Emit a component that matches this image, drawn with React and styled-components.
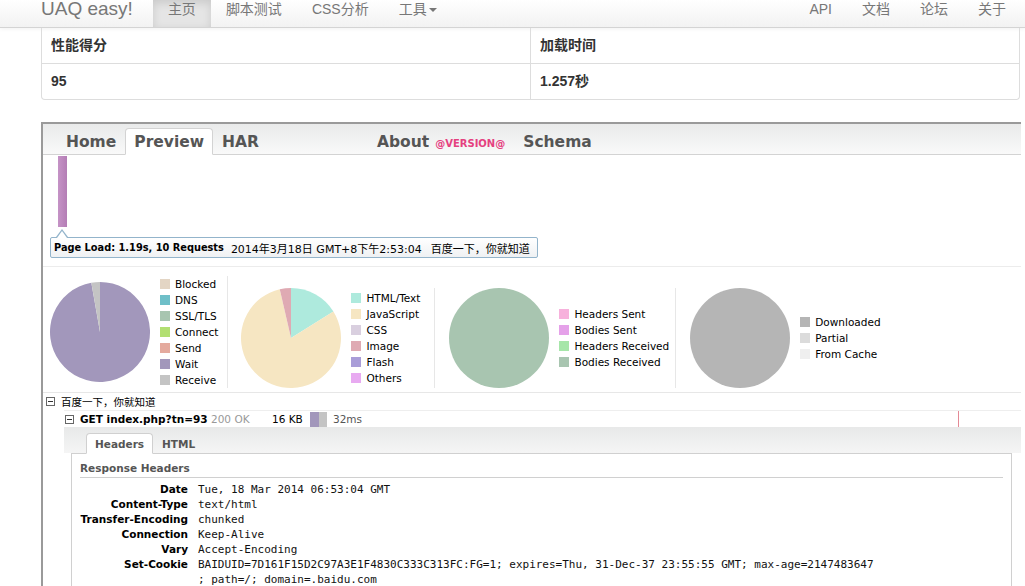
import React from "react";
import styled, { createGlobalStyle } from "styled-components";

const HAR_FONT = `"DejaVu Sans", "Noto Sans CJK SC", sans-serif`;
const NAV_FONT = `"Liberation Sans", "Noto Sans CJK SC", sans-serif`;

const GlobalStyle = createGlobalStyle`
  html, body {
    margin: 0;
    padding: 0;
    background: #fff;
    overflow: hidden;
  }
  body {
    font-family: ${NAV_FONT};
    color: #333;
  }
`;

const Navbar = styled.div`
  height: 28px;
  box-sizing: border-box;
  display: flex;
  align-items: stretch;
  padding: 0 4px 0 41px;
  background: linear-gradient(#ffffff, #f2f2f2);
  border-bottom: 1px solid #d4d4d4;
  box-shadow: 0 1px 4px rgba(0, 0, 0, 0.06);
  font-family: ${NAV_FONT};
`;

const Brand = styled.div`
  font-size: 19px;
  line-height: 18px;
  color: #777;
  padding-right: 20px;
`;

const NavGroup = styled.div`
  display: flex;
  margin-left: ${(p) => (p.right ? "auto" : "0")};
`;

const NavItem = styled.div`
  padding: 0 15px;
  font-size: 14px;
  line-height: 18px;
  color: #777;
  background: ${(p) => (p.active ? "#e5e5e5" : "transparent")};
  box-shadow: ${(p) => (p.active ? "inset 0 3px 8px rgba(0,0,0,0.12)" : "none")};
`;

const Caret = styled.span`
  display: inline-block;
  width: 0;
  height: 0;
  margin-left: 2px;
  vertical-align: middle;
  border-top: 4px solid #777;
  border-left: 4px solid transparent;
  border-right: 4px solid transparent;
`;

const ScoreTable = styled.div`
  margin: 0 5px 0 41px;
  display: grid;
  grid-template-columns: 488px 1fr;
  border: 1px solid #ddd;
  border-top: none;
  border-radius: 0 0 4px 4px;
  font-family: ${NAV_FONT};
  font-size: 14px;
  font-weight: bold;
  color: #333;
`;

const ScoreCell = styled.div`
  padding: 8px 9px;
  line-height: 19px;
  border-left: ${(p) => (p.second ? "1px solid #ddd" : "none")};
  border-top: ${(p) => (p.body ? "1px solid #ddd" : "none")};
`;

const Viewer = styled.div`
  margin: 22px 0 0 41px;
  width: 980px;
  box-sizing: border-box;
  border-top: 2px solid #9a9a9a;
  border-left: 2px solid #9a9a9a;
  font-family: ${HAR_FONT};
`;

const TabBar = styled.div`
  height: 31px;
  box-sizing: border-box;
  display: flex;
  align-items: flex-end;
  padding-left: 14px;
  background: linear-gradient(#e9eaea, #f9f9f9);
  border-bottom: 1px solid #d3d3d3;
`;

const Tab = styled.div`
  height: 27px;
  box-sizing: border-box;
  margin-bottom: -1px;
  padding: 0 8px;
  display: flex;
  align-items: center;
  font-size: 15.5px;
  font-weight: bold;
  color: #555;
  margin-left: ${(p) => p.offset || 0}px;
  background: ${(p) => (p.active ? "#fff" : "transparent")};
  border: 1px solid ${(p) => (p.active ? "#d3d3d3" : "transparent")};
  border-bottom-color: ${(p) => (p.active ? "#fff" : "transparent")};
  border-radius: 4px 4px 0 0;
`;

const Version = styled.span`
  margin-left: 6px;
  margin-top: 3px;
  font-size: 10px;
  font-weight: bold;
  color: #e5407f;
`;

const PreviewArea = styled.div`
  padding: 1px 0 8px 0;
  border-bottom: 1px solid #ececec;
`;

const PageBar = styled.div`
  margin-left: 15px;
  width: 9px;
  height: 71px;
  background: linear-gradient(to right, #c593c6, #b47db5);
`;

const Tooltip = styled.div`
  position: relative;
  margin: 10px 0 0 7px;
  width: 488px;
  height: 21px;
  box-sizing: border-box;
  padding: 0 0 0 3px;
  display: flex;
  align-items: center;
  gap: 7px;
  border: 1px solid #93b4cb;
  border-radius: 2px;
  background: linear-gradient(#ffffff, #eff1f3);
  font-size: 11px;
  color: #000;
  white-space: nowrap;

  &::before,
  &::after {
    content: "";
    position: absolute;
    left: 5px;
    width: 0;
    height: 0;
    border-left: 6px solid transparent;
    border-right: 6px solid transparent;
  }
  &::before {
    top: -9px;
    border-bottom: 8px solid #93b4cb;
  }
  &::after {
    top: -7px;
    left: 6px;
    border-left-width: 5px;
    border-right-width: 5px;
    border-bottom: 7px solid #fff;
  }
`;

const Strong = styled.span`
  font-weight: bold;
  font-size: 9.8px;
`;

const TipTitle = styled.span`
  margin-left: 2px;
`;

const ChartRow = styled.div`
  display: flex;
  align-items: flex-end;
  padding: 9px 0 4px 0;
  border-bottom: 1px solid #e7e7e7;
`;

const ChartBlock = styled.div`
  display: flex;
  align-items: center;
  gap: 10px;
  padding: 0 ${(p) => (p.last ? 0 : p.padRight)}px 0 ${(p) => p.padLeft}px;
  border-right: ${(p) => (p.last ? "none" : "1px solid #e7e7e7")};
`;

const Legend = styled.div`
  display: flex;
  flex-direction: column;
`;

const LegendItem = styled.div`
  display: flex;
  align-items: center;
  gap: 5px;
  height: 16px;
  font-size: 10.5px;
  color: #000;
  white-space: nowrap;
`;

const Swatch = styled.span`
  width: 10px;
  height: 10px;
  background: ${(p) => p.color};
`;

const TreeRow = styled.div`
  position: relative;
  display: flex;
  align-items: center;
  height: 17px;
  box-sizing: border-box;
  margin-left: ${(p) => p.indent}px;
  padding-left: ${(p) => p.pad}px;
  border-top: ${(p) => (p.line ? "1px solid #eee" : "none")};
  font-size: 10.5px;
  color: #000;
  white-space: nowrap;
`;

const Toggle = styled.span`
  position: relative;
  width: 9px;
  height: 9px;
  box-sizing: border-box;
  border: 1px solid #666;
  margin-right: 6px;
  flex: none;
  &::after {
    content: "";
    position: absolute;
    left: 1px;
    right: 1px;
    top: 3px;
    height: 1px;
    background: #333;
  }
`;

const UrlCell = styled.span`
  width: 128px;
  overflow: hidden;
  font-weight: bold;
`;

const Cell = styled.span`
  width: ${(p) => p.w}px;
  padding-left: ${(p) => p.pl || 0}px;
  color: ${(p) => p.color || "#000"};
`;

const TimeBar = styled.span`
  display: flex;
  height: 15px;
  margin-right: 6px;
`;

const TimeSeg = styled.span`
  width: ${(p) => p.w}px;
  background: ${(p) => p.color};
`;

const LoadMarker = styled.span`
  position: absolute;
  left: 894px;
  top: 0;
  bottom: 0;
  width: 1px;
  background: #e48a96;
`;

const Detail = styled.div`
  margin-left: 21px;
`;

const DetailTabs = styled.div`
  height: 26px;
  box-sizing: border-box;
  display: flex;
  align-items: flex-end;
  padding-left: 22px;
  background: linear-gradient(#e8e9e9, #f5f5f5);
`;

const DetailTab = styled.div`
  height: 21px;
  box-sizing: border-box;
  padding: 0 8px;
  margin-bottom: -1px;
  display: flex;
  align-items: center;
  font-size: 10.5px;
  font-weight: bold;
  color: #555;
  background: ${(p) => (p.active ? "#fff" : "transparent")};
  border: 1px solid ${(p) => (p.active ? "#d0d0d0" : "transparent")};
  border-bottom-color: ${(p) => (p.active ? "#fff" : "transparent")};
  border-radius: 4px 4px 0 0;
  position: relative;
  z-index: 1;
`;

const DetailBody = styled.div`
  margin: 0 9px 0 7px;
  padding: 8px 8px 0 8px;
  border: 1px solid #d0d0d0;
  border-bottom: none;
  min-height: 200px;
`;

const SectionTitle = styled.div`
  font-size: 10.5px;
  font-weight: bold;
  color: #555;
  line-height: 13px;
  padding-bottom: 2px;
  border-bottom: 1px solid #d0d0d0;
  margin-bottom: 4px;
`;

const HeaderGrid = styled.div`
  display: grid;
  grid-template-columns: 108px 1fr;
  column-gap: 10px;
`;

const HeaderName = styled.div`
  text-align: right;
  font-size: 10.5px;
  font-weight: bold;
  line-height: 15px;
  color: #000;
`;

const HeaderValue = styled.div`
  font-family: "DejaVu Sans Mono", monospace;
  font-size: 11px;
  line-height: 15px;
  color: #111;
  white-space: nowrap;
`;

const slicePath = (a0, a1) => {
  const p = (a) => {
    const r = (a * Math.PI) / 180;
    return `${(50 + 50 * Math.sin(r)).toFixed(2)},${(50 - 50 * Math.cos(r)).toFixed(2)}`;
  };
  const large = a1 - a0 > 180 ? 1 : 0;
  return `M50,50 L${p(a0)} A50,50 0 ${large} 1 ${p(a1)} Z`;
};

const Pie = ({ slices }) => (
  <svg width="100" height="100" viewBox="0 0 100 100">
    {slices.length === 1 ? (
      <circle cx="50" cy="50" r="50" fill={slices[0].color} />
    ) : (
      slices.map((s, i) => <path key={i} d={slicePath(s.from, s.to)} fill={s.color} />)
    )}
  </svg>
);

const charts = [
  {
    padLeft: 7,
    padRight: 9,
    slices: [
      { from: 0, to: 350, color: "#a297bb" },
      { from: 350, to: 360, color: "#c4c4c4" },
    ],
    legend: [
      ["Blocked", "#e3d5c4"],
      ["DNS", "#6fbfc8"],
      ["SSL/TLS", "#a8c5b0"],
      ["Connect", "#b2df72"],
      ["Send", "#e4aa9e"],
      ["Wait", "#a297bb"],
      ["Receive", "#c4c4c4"],
    ],
  },
  {
    padLeft: 13,
    padRight: 14,
    slices: [
      { from: 0, to: 58, color: "#aeeadd" },
      { from: 58, to: 347, color: "#f6e6c2" },
      { from: 347, to: 360, color: "#dfaab3" },
    ],
    legend: [
      ["HTML/Text", "#aeeadd"],
      ["JavaScript", "#f6e6c2"],
      ["CSS", "#d9cfdf"],
      ["Image", "#dfaab3"],
      ["Flash", "#a99dd8"],
      ["Others", "#e8aaf1"],
    ],
  },
  {
    padLeft: 14,
    padRight: 6,
    slices: [{ from: 0, to: 360, color: "#a8c5b0" }],
    legend: [
      ["Headers Sent", "#f7b1dc"],
      ["Bodies Sent", "#e5a1e9"],
      ["Headers Received", "#a6e6a9"],
      ["Bodies Received", "#a8c5b0"],
    ],
  },
  {
    padLeft: 14,
    padRight: 0,
    last: true,
    slices: [{ from: 0, to: 360, color: "#b5b5b5" }],
    legend: [
      ["Downloaded", "#b5b5b5"],
      ["Partial", "#dbdbdb"],
      ["From Cache", "#efefef"],
    ],
  },
];

const headers = [
  ["Date", "Tue, 18 Mar 2014 06:53:04 GMT"],
  ["Content-Type", "text/html"],
  ["Transfer-Encoding", "chunked"],
  ["Connection", "Keep-Alive"],
  ["Vary", "Accept-Encoding"],
  [
    "Set-Cookie",
    [
      "BAIDUID=7D161F15D2C97A3E1F4830C333C313FC:FG=1; expires=Thu, 31-Dec-37 23:55:55 GMT; max-age=2147483647",
      "; path=/; domain=.baidu.com",
    ],
  ],
];

const App = () => {
  return (
    <>
      <GlobalStyle />
      <Navbar>
        <Brand>UAQ easy!</Brand>
        <NavGroup>
          <NavItem active>主页</NavItem>
          <NavItem>脚本测试</NavItem>
          <NavItem>CSS分析</NavItem>
          <NavItem>
            工具
            <Caret />
          </NavItem>
        </NavGroup>
        <NavGroup right>
          <NavItem>API</NavItem>
          <NavItem>文档</NavItem>
          <NavItem>论坛</NavItem>
          <NavItem>关于</NavItem>
        </NavGroup>
      </Navbar>

      <ScoreTable>
        <ScoreCell>性能得分</ScoreCell>
        <ScoreCell second>加载时间</ScoreCell>
        <ScoreCell body>95</ScoreCell>
        <ScoreCell body second>
          1.257秒
        </ScoreCell>
      </ScoreTable>

      <Viewer>
        <TabBar>
          <Tab>Home</Tab>
          <Tab active>Preview</Tab>
          <Tab>HAR</Tab>
          <Tab offset={100}>
            About<Version>@VERSION@</Version>
          </Tab>
          <Tab>Schema</Tab>
        </TabBar>

        <PreviewArea>
          <PageBar />
          <Tooltip>
            <Strong>Page Load: 1.19s, 10 Requests</Strong>
            <span>2014年3月18日 GMT+8下午2:53:04</span>
            <TipTitle>百度一下，你就知道</TipTitle>
          </Tooltip>
        </PreviewArea>

        <ChartRow>
          {charts.map((c, i) => (
            <ChartBlock key={i} padLeft={c.padLeft} padRight={c.padRight} last={c.last}>
              <Pie slices={c.slices} />
              <Legend>
                {c.legend.map(([label, color]) => (
                  <LegendItem key={label}>
                    <Swatch color={color} />
                    {label}
                  </LegendItem>
                ))}
              </Legend>
            </ChartBlock>
          ))}
        </ChartRow>

        <TreeRow indent={0} pad={3}>
          <Toggle />
          百度一下，你就知道
        </TreeRow>
        <TreeRow indent={21} pad={1} line>
          <Toggle />
          <UrlCell>GET index.php?tn=93(</UrlCell>
          <Cell w={61} pl={3} color="#999">
            200 OK
          </Cell>
          <Cell w={38}>16 KB</Cell>
          <TimeBar>
            <TimeSeg w={9} color="#a297bb" />
            <TimeSeg w={8} color="#c4c4c4" />
          </TimeBar>
          <Cell w={40} color="#555">
            32ms
          </Cell>
          <LoadMarker />
        </TreeRow>

        <Detail>
          <DetailTabs>
            <DetailTab active>Headers</DetailTab>
            <DetailTab>HTML</DetailTab>
          </DetailTabs>
          <DetailBody>
            <SectionTitle>Response Headers</SectionTitle>
            <HeaderGrid>
              {headers.map(([name, value]) => (
                <React.Fragment key={name}>
                  <HeaderName>{name}</HeaderName>
                  <HeaderValue>
                    {Array.isArray(value)
                      ? value.map((line) => <div key={line}>{line}</div>)
                      : value}
                  </HeaderValue>
                </React.Fragment>
              ))}
            </HeaderGrid>
          </DetailBody>
        </Detail>
      </Viewer>
    </>
  );
};

export default App;
